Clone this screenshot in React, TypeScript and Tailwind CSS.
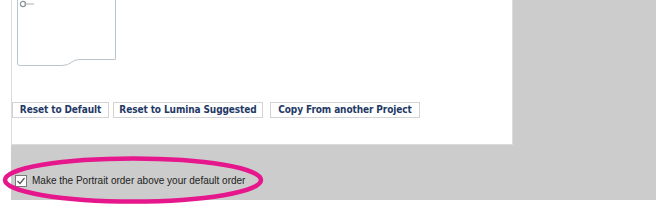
import React from "react";

function PortraitOutline() {
  return (
    <svg width="104" height="70" viewBox="0 0 104 70" className="block">
      {/* page shape with folded bottom */}
      <path
        d="M5.5 0 V63 Q5.5 65.5 8 65.5 H50 Q56 65.5 60 62 Q63 59.5 68 59.5 H103.5 V0"
        fill="none"
        stroke="#b9c6cd"
        strokeWidth="1"
      />
      {/* small pin / arrow */}
      <circle cx="11" cy="4" r="2.6" fill="none" stroke="#8a9499" strokeWidth="1.2" />
      <path d="M12 4 H22" stroke="#a7b0b5" strokeWidth="1" />
    </svg>
  );
}

function ActionButton({ label, w }: { label: string; w: string }) {
  return (
    <button className={`${w} h-[16px] bg-white border border-[#d3d3d3] text-[10px] leading-[14px] font-bold text-[#1f3a66] font-['DejaVu_Sans_Condensed','DejaVu_Sans',sans-serif] tracking-[-0.1px] whitespace-nowrap`}>
      {label}
    </button>
  );
}

export default function App() {
  return (
    <div className="relative w-[665px] h-[211px] bg-white overflow-hidden">
      <div className="ml-[11px] w-[645px] h-[200px] bg-[#cccccc] flex flex-col">
        <div className="w-[502px] h-[145px] bg-white border-l border-r border-b border-[#dcdcdc] flex flex-col">
          <PortraitOutline />
          <div className="mt-[32px] flex">
            <ActionButton label="Reset to Default" w="w-[97px] mr-[4px]" />
            <ActionButton label="Reset to Lumina Suggested" w="w-[150px] mr-[7px]" />
            <ActionButton label="Copy From another Project" w="w-[150px]" />
          </div>
        </div>
        <label className="mt-[28px] ml-[4px] flex items-center gap-[5px] font-['Liberation_Sans',Arial,sans-serif] text-[10px] text-[#222]">
          <span className="w-[12px] h-[12px] border border-[#7a7a7a] bg-white flex items-center justify-center">
            <svg width="10" height="10" viewBox="0 0 10 10">
              <path d="M1.5 5 L4 7.5 L8.5 2" fill="none" stroke="#555" strokeWidth="1.2" />
            </svg>
          </span>
          Make the Portrait order above your default order
        </label>
      </div>
      <svg
        className="absolute left-0 top-[150px] pointer-events-none"
        width="270"
        height="61"
        viewBox="0 0 270 61"
      >
        <ellipse cx="133" cy="30" rx="128" ry="21.5" fill="none" stroke="#e6168c" strokeWidth="4.5" />
      </svg>
    </div>
  );
}
